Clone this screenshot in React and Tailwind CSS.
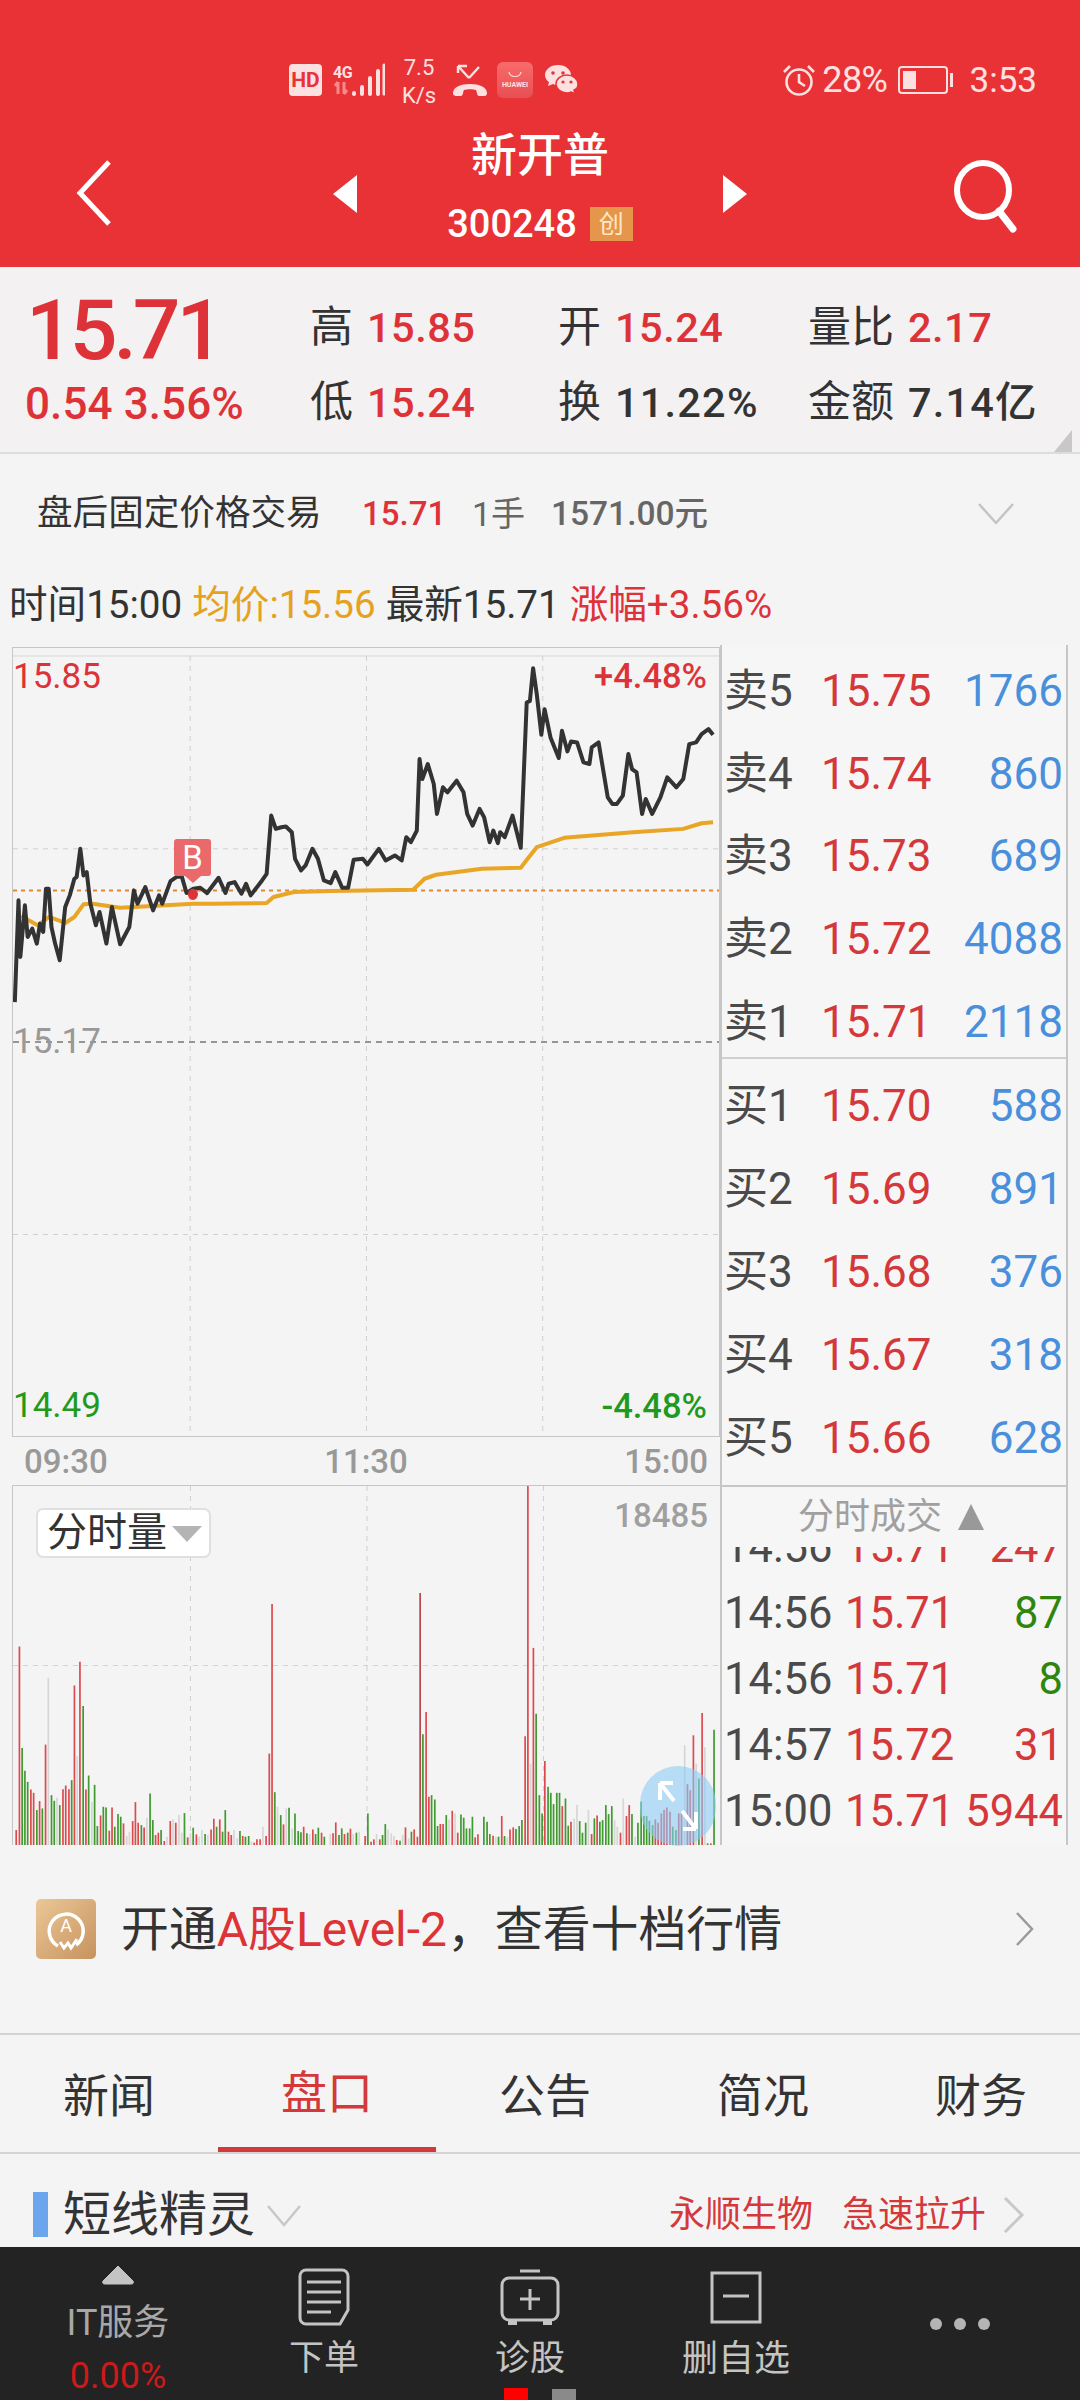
import React from "react";

const priceLine = "30,1626 38,1320 42,1490 52,1335 58,1430 68,1405 78,1450 85,1390 92,1415 98,1285 104,1285 110,1400 118,1450 128,1500 140,1340 150,1305 160,1255 165,1250 173,1165 180,1245 187,1235 195,1330 207,1395 215,1355 230,1450 242,1340 260,1452 280,1400 290,1290 298,1330 315,1280 332,1350 345,1305 352,1330 370,1262 385,1248 395,1250 405,1298 420,1285 435,1282 450,1298 475,1252 490,1298 497,1270 510,1265 525,1300 535,1270 545,1305 570,1260 580,1240 590,1065 600,1105 612,1100 622,1098 635,1115 642,1195 655,1230 665,1215 680,1165 692,1195 705,1260 720,1268 730,1235 745,1282 758,1282 770,1198 790,1195 800,1212 825,1165 840,1200 860,1185 875,1200 885,1130 895,1145 908,1110 914,895 920,955 932,910 945,970 952,1060 965,980 975,995 995,960 1010,995 1018,1060 1030,1095 1045,1045 1055,1070 1067,1145 1075,1110 1085,1148 1090,1115 1100,1130 1117,1065 1135,1162 1148,725 1155,720 1162,622 1170,700 1180,822 1187,745 1200,830 1218,892 1225,810 1237,872 1245,842 1258,845 1272,905 1285,910 1290,860 1305,845 1325,1010 1335,1030 1345,1030 1358,1005 1370,880 1378,925 1388,935 1400,1060 1408,1015 1422,1060 1440,1010 1455,950 1475,980 1490,955 1503,850 1518,845 1530,820 1545,805 1555,822";
const avgLine = "45,1365 60,1380 80,1395 105,1370 140,1388 160,1370 180,1332 200,1330 260,1342 330,1337 420,1330 470,1330 580,1328 595,1310 640,1295 720,1292 900,1288 925,1255 950,1243 1050,1225 1135,1222 1150,1195 1170,1160 1230,1132 1380,1115 1490,1105 1530,1088 1555,1085";

const bars = "33,1200,r 40,648,r 46,953,g 52,1022,g 58,1055,g 65,1078,r 71,1088,r 78,1140,g 84,1113,r 90,1135,g 97,943,r 103,742,n 110,1095,g 116,1112,g 122,1103,n 128,1125,g 135,1077,r 141,1066,r 148,1077,r 154,1050,g 160,765,r 166,978,n 172,694,r 179,827,g 185,1078,r 191,1036,g 198,1116,n 204,1064,g 210,1188,g 217,1156,r 223,1130,g 229,1132,g 236,1202,r 242,1132,r 248,1190,g 255,1152,g 261,1160,g 267,1180,r 274,1218,n 280,1205,n 287,1173,r 293,1116,r 299,1178,r 306,1185,g 312,1192,r 318,1163,n 325,1090,g 331,1170,g 337,1215,r 343,1208,r 349,1200,g 356,1233,r 362,1220,n 369,1173,r 375,1168,n 381,1178,r 388,1155,n 394,1208,n 400,1149,g 407,1222,r 413,1210,n 419,1193,g 426,1213,r 432,1220,n 438,1200,n 445,1212,g 451,1215,n 458,1198,r 464,1166,r 470,1190,g 477,1168,r 483,1205,g 489,1140,g 496,1205,r 502,1215,r 508,1200,n 515,1225,n 521,1203,g 527,1218,r 533,1220,g 540,1218,g 546,1235,n 552,1238,r 558,1228,r 565,1228,r 571,1190,n 578,1218,r 585,970,r 591,520,r 597,1086,g 603,1130,n 610,1155,g 616,1183,r 622,1135,n 628,1133,g 635,1195,n 641,1150,g 648,1203,g 654,1207,g 660,1190,r 667,1210,g 673,1212,n 680,1198,r 686,1212,g 692,1193,g 699,1208,r 705,1220,g 718,1212,n 724,1210,r 730,1177,r 737,1215,g 743,1195,g 749,1212,r 756,1208,g 762,1196,r 768,1212,n 775,1208,g 781,1205,n 794,1218,r 800,1150,g 807,1235,r 813,1228,r 819,1212,n 826,1228,r 832,1215,g 838,1182,g 844,1198,n 851,1210,n 857,1218,n 863,1230,r 870,1232,g 876,1215,n 882,1192,r 889,1225,n 895,1205,g 901,1198,r 908,1220,r 914,487,d 920,912,g 927,845,r 933,1100,r 939,1095,g 946,1108,g 952,1188,g 958,1182,r 964,1182,r 971,1155,g 977,1168,n 984,1142,r 990,1150,n 996,1208,r 1003,1153,g 1009,1163,g 1015,1195,g 1022,1195,g 1028,1160,g 1034,1222,r 1040,1213,r 1053,1160,g 1060,1175,g 1066,1212,g 1073,1217,r 1079,1220,n 1085,1220,g 1092,1158,r 1098,1218,g 1104,1222,n 1110,1198,r 1117,1192,r 1123,1197,g 1130,1188,g 1136,1170,g 1143,918,r 1149,165,r 1155,1000,n 1161,652,r 1167,850,g 1174,1095,g 1180,1150,g 1186,992,r 1193,1070,g 1199,1088,g 1205,1122,g 1212,1088,g 1218,1088,g 1224,1128,r 1231,1105,g 1237,1187,g 1243,1175,r 1250,1165,n 1256,1125,n 1262,1173,g 1268,1208,g 1275,1178,g 1281,1140,n 1288,1212,r 1294,1165,g 1300,1156,r 1306,1175,g 1312,1170,g 1319,1125,g 1325,1152,g 1332,1128,g 1338,1170,n 1344,1190,n 1351,1208,r 1357,1105,n 1364,1158,r 1370,1125,r 1376,1152,g 1383,1220,n 1389,1178,g 1396,1115,g 1402,1158,g 1408,1158,g 1414,1172,g 1421,1185,g 1427,1168,r 1433,1178,r 1440,1150,r 1446,1140,r 1452,1132,r 1459,1145,r 1465,1190,g 1472,1200,g 1478,1150,r 1484,1145,r 1491,945,n 1497,1062,r 1503,1080,r 1510,915,r 1516,1000,n 1522,1045,g 1529,848,r 1535,950,n 1541,1240,g 1548,1240,r 1555,898,g"
  .split(" ")
  .map((s) => s.split(","));
const barColor = { r: "#dd4a4d", g: "#3f9a30", n: "#d6d6d6", d: "#b5484c" };

const sells = [["卖5", "15.75", "1766"], ["卖4", "15.74", "860"], ["卖3", "15.73", "689"], ["卖2", "15.72", "4088"], ["卖1", "15.71", "2118"]];
const buys = [["买1", "15.70", "588"], ["买2", "15.69", "891"], ["买3", "15.68", "376"], ["买4", "15.67", "318"], ["买5", "15.66", "628"]];
const trades = [
  ["14:56", "15.71", "247", "text-[#d5383a]"],
  ["14:56", "15.71", "87", "text-[#2f860f]"],
  ["14:56", "15.71", "8", "text-[#2f860f]"],
  ["14:57", "15.72", "31", "text-[#d5383a]"],
  ["15:00", "15.71", "5944", "text-[#d5383a]"],
];

function BookRow({ row, h }) {
  return (
    <div className={`flex items-center pl-[2px] pr-[3px] text-[44px] leading-none ${h}`}>
      <span className="w-[97px] text-[#4a4a4a] whitespace-nowrap">{row[0]}</span>
      <span className="text-[#d5383a]">{row[1]}</span>
      <span className="ml-auto text-[#4a8fdc]">{row[2]}</span>
    </div>
  );
}

function Stat({ label, value, w, dark }) {
  return (
    <div className={`flex items-center gap-[14px] whitespace-nowrap ${w}`}>
      <span className="text-[43px] leading-none text-[#333]">{label}</span>
      <span className={`text-[41.5px] leading-none font-medium ${dark ? "text-[#333] tracking-[1.2px]" : "text-[#dd3338] tracking-[0.5px]"}`}>{value}</span>
    </div>
  );
}

function Status() {
  return (
    <div className="flex items-center h-[46px] pl-[289px] pr-[43px] text-[#fde0e0]">
      <div className="w-[33px] h-[32px] rounded-[4px] bg-[#fde0e0] flex items-center justify-center text-[#e83235] text-[21px] font-bold leading-none">HD</div>
      <div className="ml-[11px] w-[19px] flex flex-col items-start">
        <span className="text-[16px] font-bold leading-[16px] tracking-[-0.5px]">4G</span>
        <svg width="19" height="14" viewBox="0 0 19 14"><path d="M5 1v12M5 1L2 5M11 13V1M11 13l3-4" stroke="#f58a8a" strokeWidth="3" fill="none" /></svg>
      </div>
      <svg width="34" height="34" viewBox="0 0 34 34" className="ml-[-1px]">
        <g stroke="#fde0e0" strokeWidth="4" strokeLinecap="round">
          <path d="M3 30v1M11 24v7M19 15v16M27 8v23" />
          <path d="M33 2v29" strokeWidth="3" />
        </g>
      </svg>
      <div className="ml-[14px] w-[40px] flex flex-col items-center text-[22px] leading-[28px] mt-[4px]">
        <span>7.5</span>
        <span>K/s</span>
      </div>
      <svg width="36" height="34" viewBox="0 0 36 34" className="ml-[13px]">
        <path d="M6 3l11 12M6 3h9M6 3v7M17 15L27 4" fill="none" stroke="#fde0e0" strokeWidth="2.4" />
        <path d="M1 30c0-6 8-9 17-9s17 3 17 9c0 3-2 3-4 3h-4c-2 0-2-4-3-6-3-1-9-1-12 0-1 2-1 6-3 6H5c-2 0-4 0-4-3z" fill="#fde0e0" />
      </svg>
      <div className="ml-[9px] w-[36px] h-[36px] rounded-[6px] bg-[linear-gradient(180deg,#f96b6b,#e84f52)] flex flex-col items-center justify-center">
        <svg width="14" height="8" viewBox="0 0 14 8"><path d="M1 1c1 6 11 6 12 0" fill="none" stroke="#fde0e0" strokeWidth="1.2" /></svg>
        <span className="text-[7px] leading-[8px] font-bold text-[#fde0e0] mt-[2px]">HUAWEI</span>
      </div>
      <svg width="35" height="32" viewBox="0 0 35 32" className="ml-[11px]">
        <path d="M14 1C6 1 1 6 1 11c0 3 2 6 4 7l-1 4 5-2c2 1 3 1 5 1 8 0 13-5 13-10S22 1 14 1z" fill="#fde0e0" />
        <circle cx="9" cy="9" r="1.8" fill="#e83235" />
        <circle cx="19" cy="9" r="1.8" fill="#e83235" />
        <path d="M23 11c-6 0-11 4-11 9s5 9 11 9c1 0 3 0 4-1l4 2-1-4c3-1 4-3 4-6 0-5-5-9-11-9z" fill="#fde0e0" stroke="#e83235" strokeWidth="1.5" />
        <circle cx="19" cy="18" r="1.6" fill="#e83235" />
        <circle cx="27" cy="18" r="1.6" fill="#e83235" />
      </svg>
      <div className="ml-auto flex items-center">
        <svg width="34" height="34" viewBox="0 0 34 34">
          <circle cx="17" cy="19" r="12.5" fill="none" stroke="#fde0e0" strokeWidth="2.6" />
          <path d="M17 11v8l6 4M2 9l6-6M32 9l-6-6" fill="none" stroke="#fde0e0" strokeWidth="2.6" />
        </svg>
        <span className="ml-[6px] text-[36px] leading-none tracking-[-0.5px]">28%</span>
        <div className="ml-[10px] w-[50px] h-[28px] border-2 border-[#fde0e0] rounded-[4px] p-[3px]">
          <div className="w-[13px] h-full bg-[#fde0e0]" />
        </div>
        <div className="ml-[2px] w-[3px] h-[14px] bg-[#fde0e0]" />
        <span className="ml-[17px] text-[35px] leading-none">3:53</span>
      </div>
    </div>
  );
}

function Header() {
  return (
    <div className="h-[267px] bg-[#e83235] pt-[57px]">
      <Status />
      <div className="flex items-start h-[164px]">
        <div className="w-[333px] pl-[74px] pt-[55px]">
          <svg width="42" height="70" viewBox="0 0 42 70">
            <path d="M35 4L6 35l29 31" fill="none" stroke="#fff" strokeWidth="5" />
          </svg>
        </div>
        <svg width="24" height="38" viewBox="0 0 24 38" className="mt-[72px]">
          <path d="M24 0v38L0 19z" fill="#fff" />
        </svg>
        <div className="w-[366px] flex flex-col items-center pt-[26px]">
          <span className="text-[46px] leading-[52px] text-white font-medium">新开普</span>
          <div className="flex items-center mt-[24px]">
            <span className="text-[38px] leading-none text-white font-medium">300248</span>
            <span className="ml-[13px] w-[43px] h-[34px] bg-[#e5964a] flex items-center justify-center text-[25px] leading-none text-[#fde8c8]">创</span>
          </div>
        </div>
        <svg width="24" height="38" viewBox="0 0 24 38" className="mt-[72px]">
          <path d="M0 0v38L24 19z" fill="#fff" />
        </svg>
        <div className="ml-auto pr-[60px] pt-[57px]">
          <svg width="70" height="74" viewBox="0 0 70 74">
            <ellipse cx="33" cy="30" rx="26" ry="27" fill="none" stroke="#fff" strokeWidth="6" />
            <path d="M49 51l14 18" fill="none" stroke="#fff" strokeWidth="7" strokeLinecap="round" />
          </svg>
        </div>
      </div>
    </div>
  );
}

function StatsRow() {
  return (
    <div className="relative h-[187px] bg-[#f3f1f1] border-b-2 border-[#dcdcdc] flex">
      <div className="w-[310px] pl-[25px] pt-[19px]">
        <div className="text-[84px] leading-[90px] font-medium text-[#dd3338] tracking-[-4px] pl-[1px]">15.71</div>
        <div className="text-[44px] leading-none font-medium text-[#dd3338] mt-[6px] whitespace-nowrap tracking-[0.1px]">0.54 3.56%</div>
      </div>
      <div className="flex flex-col gap-[32px] pt-[39px]">
        <div className="flex">
          <Stat label="高" value="15.85" w="w-[248px]" />
          <Stat label="开" value="15.24" w="w-[250px]" />
          <Stat label="量比" value="2.17" w="w-[262px]" />
        </div>
        <div className="flex">
          <Stat label="低" value="15.24" w="w-[248px]" />
          <Stat label="换" value="11.22%" w="w-[250px]" dark />
          <Stat label="金额" value="7.14亿" w="w-[262px]" dark />
        </div>
      </div>
      <svg width="18" height="22" viewBox="0 0 18 22" className="absolute right-[8px] bottom-0">
        <path d="M18 0v22H0z" fill="#c8c8c8" />
      </svg>
    </div>
  );
}

function AfterHours() {
  return (
    <div className="h-[116px] flex items-center pl-[37px] pt-[3px] whitespace-nowrap text-[34px] leading-none">
      <span className="w-[325px] text-[#333] text-[35.6px]">盘后固定价格交易</span>
      <span className="w-[110px] text-[#dd3338] font-medium text-[33px]">15.71</span>
      <span className="w-[79px] text-[#666]">1手</span>
      <span className="text-[#666] font-medium text-[33.5px]">1571.00元</span>
      <svg width="36" height="22" viewBox="0 0 36 22" className="ml-auto mr-[66px]">
        <path d="M1 1l17 19L35 1" fill="none" stroke="#c4c4c4" strokeWidth="2.5" />
      </svg>
    </div>
  );
}

function Legend() {
  return (
    <div className="h-[75px] pl-[9px] pb-[5px] flex items-center gap-[10px] whitespace-nowrap text-[38.6px] leading-none">
      <span className="text-[#333]">时间15:00</span>
      <span className="text-[#e5a21f]">均价:15.56</span>
      <span className="text-[#333]">最新15.71</span>
      <span className="text-[#dd3338]">涨幅+3.56%</span>
    </div>
  );
}

function MainChart() {
  const v = [413, 798, 1183];
  return (
    <div className="relative h-[790px] border border-[#c6c6c6]">
      <svg className="absolute inset-0 w-full h-full" viewBox="26 561 1542 2370" preserveAspectRatio="none">
        <path d="M26 585H1568" stroke="#d6d6d6" strokeWidth="1" vectorEffect="non-scaling-stroke" />
        {v.map((x) => (
          <path key={x} d={`M${x} 585V2931`} stroke="#cfcfcf" strokeWidth="1" strokeDasharray="5 5" vectorEffect="non-scaling-stroke" />
        ))}
        <path d="M26 1165H1568M26 2325H1568" stroke="#cfcfcf" strokeWidth="1" strokeDasharray="5 5" vectorEffect="non-scaling-stroke" />
        <path d="M26 1746H1568" stroke="#777" strokeWidth="1.5" strokeDasharray="6 5" vectorEffect="non-scaling-stroke" />
        <path d="M26 1290H1568" stroke="#e0892e" strokeWidth="2" strokeDasharray="4 4" vectorEffect="non-scaling-stroke" />
        <polyline points={avgLine} fill="none" stroke="#e8a526" strokeWidth="4" strokeLinejoin="round" vectorEffect="non-scaling-stroke" />
        <polyline points={priceLine} fill="none" stroke="#333" strokeWidth="4" strokeLinejoin="round" vectorEffect="non-scaling-stroke" />
        <ellipse cx="419" cy="1302" rx="11" ry="17" fill="#dd3338" />
      </svg>
      <div className="absolute left-[161px] top-[191px] w-[37px] h-[37px] rounded-[3px] bg-[#ea6a6c] flex items-center justify-center text-white text-[33px] leading-none">B</div>
      <div className="absolute left-[172px] top-[228px] w-0 h-0 border-x-[8px] border-x-transparent border-t-[7px] border-t-[#ea6a6c]" />
      <span className="absolute left-[0px] top-[11px] text-[35px] leading-none text-[#dd3338]">15.85</span>
      <span className="absolute right-[12px] top-[11px] text-[34.5px] leading-none font-medium text-[#dd3338]">+4.48%</span>
      <span className="absolute left-[0px] top-[376px] text-[35px] leading-none text-[#999]">15.17</span>
      <span className="absolute left-[0px] bottom-[13px] text-[35px] leading-none text-[#1f9a1f]">14.49</span>
      <span className="absolute right-[12px] bottom-[13px] text-[34.5px] leading-none font-medium text-[#1f9a1f]">-4.48%</span>
    </div>
  );
}

function TimeAxis() {
  return (
    <div className="h-[48px] flex items-center justify-between pl-[12px] pr-[12px] text-[33px] leading-none font-medium text-[#999]">
      <span>09:30</span>
      <span>11:30</span>
      <span>15:00</span>
    </div>
  );
}

function VolumeChart() {
  return (
    <div className="relative h-[360px] border-t border-l border-[#c6c6c6]">
      <svg className="absolute inset-0 w-full h-full" viewBox="26 165 1542 1080" preserveAspectRatio="none">
        {[413, 798, 1183].map((x) => (
          <path key={x} d={`M${x} 165V1245`} stroke="#cfcfcf" strokeWidth="1" strokeDasharray="5 5" vectorEffect="non-scaling-stroke" />
        ))}
        <path d="M26 705H1568" stroke="#d4d4d4" strokeWidth="1.2" strokeDasharray="5 5" vectorEffect="non-scaling-stroke" />
        {bars.map(([x, y, c], i) => (
          <path key={i} d={`M${x} ${y}V1245`} stroke={barColor[c]} strokeWidth="1.7" vectorEffect="non-scaling-stroke" />
        ))}
      </svg>
      <div className="absolute left-[23px] top-[22px] w-[175px] h-[50px] rounded-[7px] bg-white border-2 border-[#e0e0e0] flex items-center pl-[9px] text-[40px] leading-none text-[#333] whitespace-nowrap">
        分时量
        <svg width="30" height="16" viewBox="0 0 30 16" className="ml-[5px] mt-[1px] shrink-0">
          <path d="M0 0h30L15 16z" fill="#b4b4b4" />
        </svg>
      </div>
      <span className="absolute right-[12px] top-[13px] text-[33px] leading-none font-medium text-[#a0a0a0]">18485</span>
      <div className="absolute left-[627px] top-[280px] w-[76px] h-[80px] rounded-full bg-[#8ccbf7]/60 flex items-center justify-center">
        <svg width="44" height="54" viewBox="0 0 44 54">
          <path d="M4 4l14 18M26 32l14 18M4 4h13M4 4v17M40 50H27M40 50V33" fill="none" stroke="#fff" strokeWidth="4" />
        </svg>
      </div>
    </div>
  );
}

function Book() {
  return (
    <div className="h-[840px] border-x-2 border-[#c6c6c6] bg-[#f6f6f6]">
      <div className="h-[414px] pt-[5px] border-b-2 border-[#d0d0d0]">
        {sells.map((r) => <BookRow key={r[0]} row={r} h="h-[82.6px]" />)}
      </div>
      <div className="pt-[5px]">
        {buys.map((r) => <BookRow key={r[0]} row={r} h="h-[83px]" />)}
      </div>
    </div>
  );
}

function Trades() {
  return (
    <div className="h-[360px] border-x-2 border-t-2 border-[#c6c6c6] bg-[#f6f6f6] flex flex-col">
      <div className="h-[60px] shrink-0 flex items-center justify-center pr-[6px] text-[#a0a0a0] text-[36px] leading-none whitespace-nowrap">
        分时成交
        <svg width="26" height="26" viewBox="0 0 26 26" className="ml-[16px]"><path d="M13 0l13 26H0z" fill="#999" /></svg>
      </div>
      <div className="flex-1 min-h-0 overflow-hidden flex flex-col justify-end">
        {trades.map((t, i) => (
          <div key={i} className="h-[66px] shrink-0 flex items-center pl-[2px] pr-[3px] text-[43.5px] leading-none whitespace-nowrap">
            <span className="w-[121px] text-[#4a4a4a]">{t[0]}</span>
            <span className="text-[#d5383a]">{t[1]}</span>
            <span className={`ml-auto ${t[3]}`}>{t[2]}</span>
          </div>
        ))}
      </div>
    </div>
  );
}

function Banner() {
  return (
    <div className="h-[188px] flex items-center pb-[20px] pl-[36px] pr-[45px]">
      <div className="w-[60px] h-[60px] rounded-[5px] bg-[linear-gradient(135deg,#ebc797,#c6935e)] flex items-center justify-center">
        <div className="relative w-[40px] h-[42px]">
          <svg width="40" height="44" viewBox="0 0 40 44" className="absolute inset-0">
            <path d="M12 38A17 17 0 1 1 30 37" fill="none" stroke="#fff" strokeWidth="3.5" />
            <path d="M14 34l4 6 4-5 3 5 6-9" fill="none" stroke="#fff" strokeWidth="3" />
          </svg>
          <span className="absolute inset-x-0 top-[9px] text-center text-[18px] leading-none text-white">A</span>
        </div>
      </div>
      <div className="ml-[25px] mt-[4px] text-[47.9px] leading-none text-[#333] whitespace-nowrap">
        开通<span className="text-[#dd3338]">A股Level-2</span>，查看十档行情
      </div>
      <svg width="20" height="34" viewBox="0 0 20 34" className="ml-auto">
        <path d="M2 1l15 16L2 33" fill="none" stroke="#9a9a9a" strokeWidth="2.5" />
      </svg>
    </div>
  );
}

function Tabs() {
  const tabs = ["新闻", "盘口", "公告", "简况", "财务"];
  return (
    <div className="h-[121px] border-y-2 border-[#d4d4d4] flex overflow-hidden text-[46px] leading-none">
      {tabs.map((t, i) => (
        <div key={t} className={`w-[218px] shrink-0 flex items-center justify-center pt-[4px] ${i === 1 ? "text-[#d5383a] border-b-[5px] border-[#d5383a] h-[117px]" : "h-full text-[#333]"}`}>
          {t}
        </div>
      ))}
    </div>
  );
}

function Section() {
  return (
    <div className="h-[93px] flex items-center pl-[33px] pr-[55px] pt-[33px] pb-[5px] overflow-hidden">
      <div className="w-[15px] h-[45px] bg-[#6aa5ee]" />
      <span className="ml-[15px] text-[48px] leading-none text-[#333] whitespace-nowrap">短线精灵</span>
      <svg width="34" height="22" viewBox="0 0 34 22" className="ml-[12px] mt-[2px]">
        <path d="M1 1l16 19L33 1" fill="none" stroke="#c8c8c8" strokeWidth="2.5" />
      </svg>
      <span className="ml-auto text-[36px] leading-none text-[#d5383a] whitespace-nowrap">永顺生物</span>
      <span className="ml-[29px] text-[36px] leading-none text-[#d5383a] whitespace-nowrap">急速拉升</span>
      <svg width="22" height="36" viewBox="0 0 22 36" className="ml-[17px]">
        <path d="M2 1l17 17L2 35" fill="none" stroke="#c8c8c8" strokeWidth="3" />
      </svg>
    </div>
  );
}

function BottomBar() {
  return (
    <div className="relative h-[153px] bg-[#232323] flex pl-[15px] overflow-hidden">
      <div className="w-[206px] flex flex-col items-center pt-[17px]">
        <svg width="34" height="21" viewBox="0 0 34 21"><path d="M17 2L32 17c1 2 0 3-2 3H4c-2 0-3-1-2-3z" fill="#c4c4c4" stroke="#c4c4c4" /></svg>
        <span className="mt-[20px] text-[36px] leading-none text-[#a8a8a8] whitespace-nowrap">IT服务</span>
        <span className="mt-[17px] text-[36px] leading-none text-[#cc1a1a] whitespace-nowrap">0.00%</span>
      </div>
      <div className="w-[206px] flex flex-col items-center pt-[21px]">
        <svg width="52" height="58" viewBox="0 0 52 58">
          <path d="M8 2h36a6 6 0 0 1 6 6v34l-8 14H8a6 6 0 0 1-6-6V8a6 6 0 0 1 6-6z" fill="none" stroke="#c4c4c4" strokeWidth="3" />
          <path d="M9 14h34M9 24h34M9 34h34M9 44h24" stroke="#c4c4c4" strokeWidth="3" />
        </svg>
        <span className="mt-[15px] text-[35px] leading-none text-[#c4c4c4]">下单</span>
      </div>
      <div className="w-[206px] flex flex-col items-center pt-[21px]">
        <svg width="60" height="58" viewBox="0 0 60 58">
          <path d="M20 3h20" stroke="#c4c4c4" strokeWidth="3" />
          <rect x="2" y="10" width="56" height="42" rx="7" fill="none" stroke="#c4c4c4" strokeWidth="3" />
          <path d="M30 21v21M20 31h20" stroke="#c4c4c4" strokeWidth="3" />
          <path d="M8 52h9v5H8zM43 52h9v5h-9z" fill="#c4c4c4" />
        </svg>
        <span className="mt-[15px] text-[35px] leading-none text-[#c4c4c4]">诊股</span>
      </div>
      <div className="w-[206px] flex flex-col items-center pt-[24px]">
        <svg width="52" height="55" viewBox="0 0 52 55">
          <rect x="2" y="2" width="48" height="49" fill="none" stroke="#c4c4c4" strokeWidth="3" />
          <path d="M13 25h26" stroke="#c4c4c4" strokeWidth="3" />
        </svg>
        <span className="mt-[15px] text-[36px] leading-none text-[#c4c4c4] whitespace-nowrap">删自选</span>
      </div>
      <div className="flex-1 flex justify-center gap-[12px] pt-[71px]">
        <div className="w-[12px] h-[12px] rounded-full bg-[#b4b4b4]" />
        <div className="w-[12px] h-[12px] rounded-full bg-[#b4b4b4]" />
        <div className="w-[12px] h-[12px] rounded-full bg-[#b4b4b4]" />
      </div>
      <div className="absolute left-[504px] bottom-0 w-[24px] h-[12px] bg-[#ff0000]" />
      <div className="absolute left-[552px] bottom-0 w-[24px] h-[11px] bg-[#8a8a8a]" />
    </div>
  );
}

export default function App() {
  return (
    <div className="w-[1080px] h-[2400px] overflow-hidden bg-[#f4f4f4] font-['Roboto','Noto_Sans_CJK_SC',sans-serif]">
      <Header />
      <StatsRow />
      <AfterHours />
      <Legend />
      <div className="flex h-[840px]">
        <div className="ml-[12px] w-[708px] pt-[2px]">
          <MainChart />
          <TimeAxis />
        </div>
        <div className="w-[348px]"><Book /></div>
      </div>
      <div className="flex h-[360px]">
        <div className="ml-[12px] w-[708px]"><VolumeChart /></div>
        <div className="w-[348px]"><Trades /></div>
      </div>
      <Banner />
      <Tabs />
      <Section />
      <BottomBar />
    </div>
  );
}
